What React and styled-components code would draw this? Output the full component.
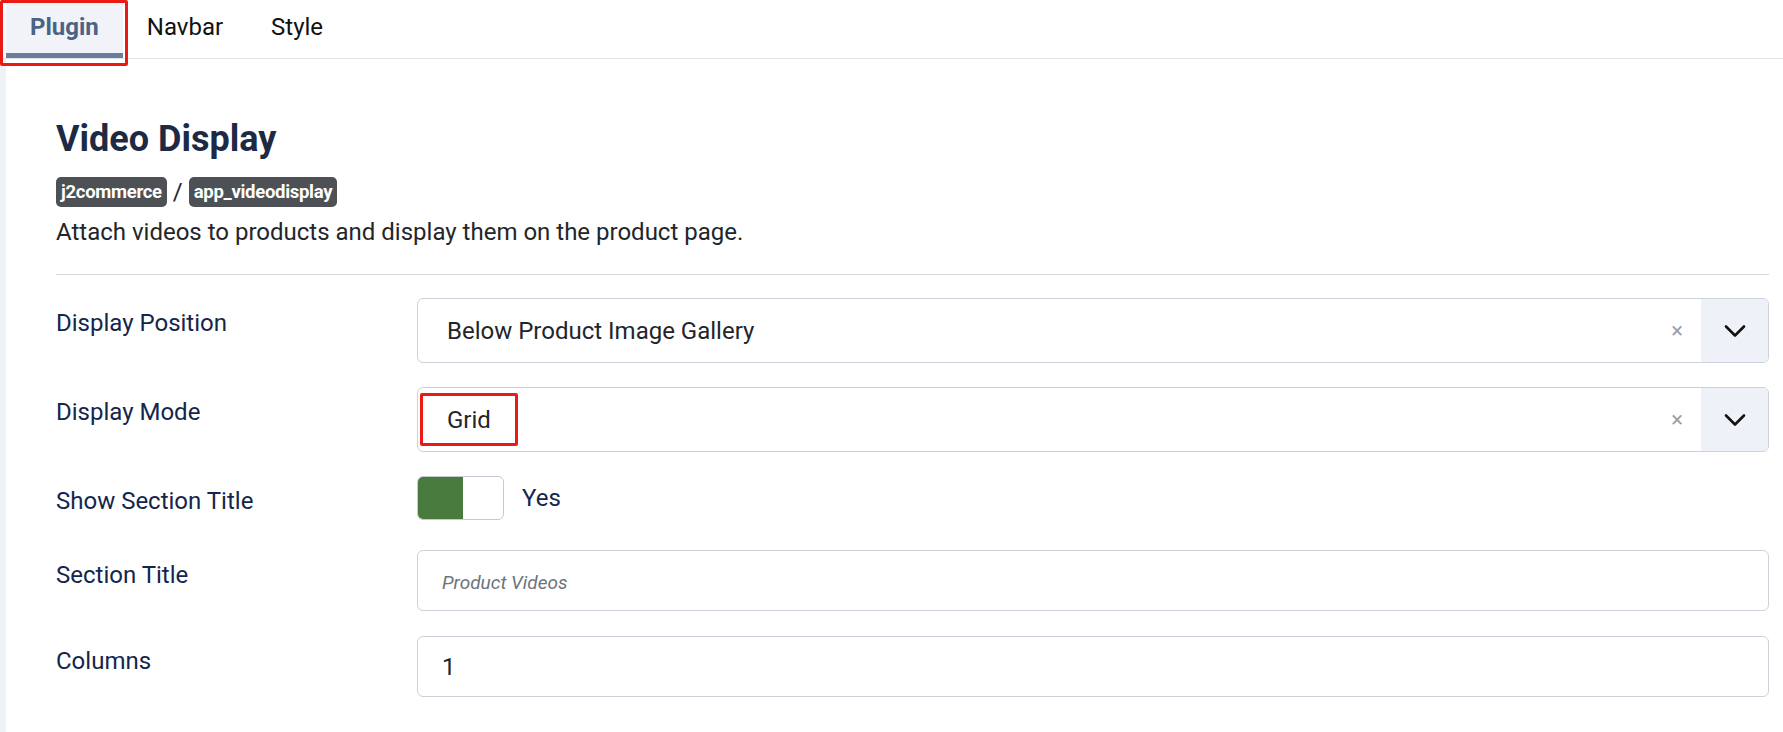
import React from "react";
import styled, { createGlobalStyle } from "styled-components";

const GlobalStyle = createGlobalStyle`
  html, body {
    margin: 0;
    padding: 0;
    background: #fff;
  }
  body {
    font-family: Roboto, "Liberation Sans", sans-serif;
    color: #22262a;
  }
`;

const Page = styled.div`
  min-height: 100vh;
  display: flex;
  flex-direction: column;
`;

const TabBar = styled.div`
  display: flex;
  height: 58px;
  padding-left: 6px;
  border-bottom: 1px solid #dfe3e8;
`;

const Tab = styled.div`
  position: relative;
  display: flex;
  align-items: center;
  padding: 0 24px 4px;
  font-size: 24px;
  font-weight: ${(p) => (p.$active ? 700 : 400)};
  color: ${(p) => (p.$active ? "#4c6387" : "#111")};
  background: ${(p) => (p.$active ? "#f1f3f8" : "transparent")};
  box-shadow: ${(p) => (p.$active ? "inset 0 -5px 0 #697e9c" : "none")};
`;

// red annotation frame drawn over a control
const Highlight = styled.span`
  position: absolute;
  border: 3px solid #ea1b14;
  border-radius: 2px;
  pointer-events: none;
  top: ${(p) => p.$top}px;
  left: ${(p) => p.$left}px;
  width: ${(p) => p.$w}px;
  height: ${(p) => p.$h}px;
  box-sizing: border-box;
`;

const Panel = styled.div`
  flex: 1;
  border-left: 6px solid #eef1f6;
  padding: 59px 14px 0 50px;
`;

const Title = styled.h2`
  margin: 0;
  font-size: 36px;
  line-height: 1.2;
  font-weight: 700;
  color: #1c2a44;
`;

const Crumbs = styled.div`
  display: flex;
  align-items: center;
  gap: 6px;
  margin-top: 16px;
`;

const Badge = styled.span`
  display: inline-block;
  height: 30px;
  line-height: 30px;
  padding: 0 5px;
  border-radius: 5px;
  background: #4d5156;
  color: #fff;
  font-size: 18.5px;
  font-weight: 700;
  letter-spacing: -0.3px;
`;

const Slash = styled.span`
  font-size: 24px;
  color: #22262a;
`;

const Desc = styled.p`
  margin: 7px 0 0;
  font-size: 24px;
  line-height: 36px;
  color: #22262a;
`;

const Rule = styled.hr`
  margin: 24px 0 23px;
  border: 0;
  border-top: 1px solid #d6d9de;
`;

const Field = styled.div`
  display: grid;
  grid-template-columns: 361px 1fr;
  align-items: start;
  margin-bottom: ${(p) => p.$space ?? 24}px;
`;

const Label = styled.label`
  padding-top: 7px;
  font-size: 24px;
  line-height: 36px;
  color: #14264c;
`;

const SelectBox = styled.div`
  position: relative;
  display: flex;
  align-items: center;
  height: 65px;
  box-sizing: border-box;
  border: 1px solid #cdd1da;
  border-radius: 6px;
  overflow: hidden;
`;

const SelectValue = styled.div`
  flex: 1;
  padding-left: 29px;
  font-size: 24px;
  color: #22262a;
`;

const Clear = styled.span`
  width: 24px;
  margin-right: 12px;
  text-align: center;
  font-size: 22px;
  color: #9a9ea5;
`;

const Caret = styled.div`
  width: 67px;
  align-self: stretch;
  display: flex;
  align-items: center;
  justify-content: center;
  background: #eef1f7;
`;

const SwitchRow = styled.div`
  display: flex;
  align-items: center;
  gap: 18px;
`;

const Switch = styled.div`
  display: flex;
  width: 87px;
  height: 44px;
  box-sizing: border-box;
  border: 1px solid #c5c9d3;
  border-radius: 6px;
  overflow: hidden;
  background: #fff;
`;

const SwitchOn = styled.span`
  width: 45px;
  background: #487b3d;
`;

const SwitchText = styled.span`
  font-size: 24px;
  color: #14264c;
`;

const Input = styled.input`
  width: 100%;
  height: 61px;
  box-sizing: border-box;
  border: 1px solid #cdd1da;
  border-radius: 6px;
  padding: 0 24px;
  font-family: inherit;
  font-size: 24px;
  color: #22262a;
  outline: none;

  &::placeholder {
    font-style: italic;
    font-size: 19px;
    color: #6d737b;
  }
`;

const Chevron = () => (
  <svg width="22" height="14" viewBox="0 0 22 14" fill="none">
    <path d="M2 2.5l9 9 9-9" stroke="#111" strokeWidth="2.6" strokeLinecap="round" strokeLinejoin="round" />
  </svg>
);

const Select = ({ value, children }) => (
  <SelectBox>
    <SelectValue>{value}</SelectValue>
    <Clear>×</Clear>
    <Caret>
      <Chevron />
    </Caret>
    {children}
  </SelectBox>
);

export default function App() {
  return (
    <Page>
      <GlobalStyle />
      <TabBar>
        <Tab $active>
          Plugin
          <Highlight $top={0} $left={-6} $w={128} $h={66} />
        </Tab>
        <Tab>Navbar</Tab>
        <Tab>Style</Tab>
      </TabBar>

      <Panel>
        <Title>Video Display</Title>
        <Crumbs>
          <Badge>j2commerce</Badge>
          <Slash>/</Slash>
          <Badge>app_videodisplay</Badge>
        </Crumbs>
        <Desc>Attach videos to products and display them on the product page.</Desc>
        <Rule />

        <Field>
          <Label>Display Position</Label>
          <Select value="Below Product Image Gallery" />
        </Field>

        <Field>
          <Label>Display Mode</Label>
          <Select value="Grid">
            <Highlight $top={5} $left={2} $w={98} $h={53} />
          </Select>
        </Field>

        <Field $space={30}>
          <Label>Show Section Title</Label>
          <SwitchRow>
            <Switch>
              <SwitchOn />
            </Switch>
            <SwitchText>Yes</SwitchText>
          </SwitchRow>
        </Field>

        <Field $space={25}>
          <Label>Section Title</Label>
          <Input placeholder="Product Videos" />
        </Field>

        <Field>
          <Label>Columns</Label>
          <Input defaultValue="1" />
        </Field>
      </Panel>
    </Page>
  );
}
